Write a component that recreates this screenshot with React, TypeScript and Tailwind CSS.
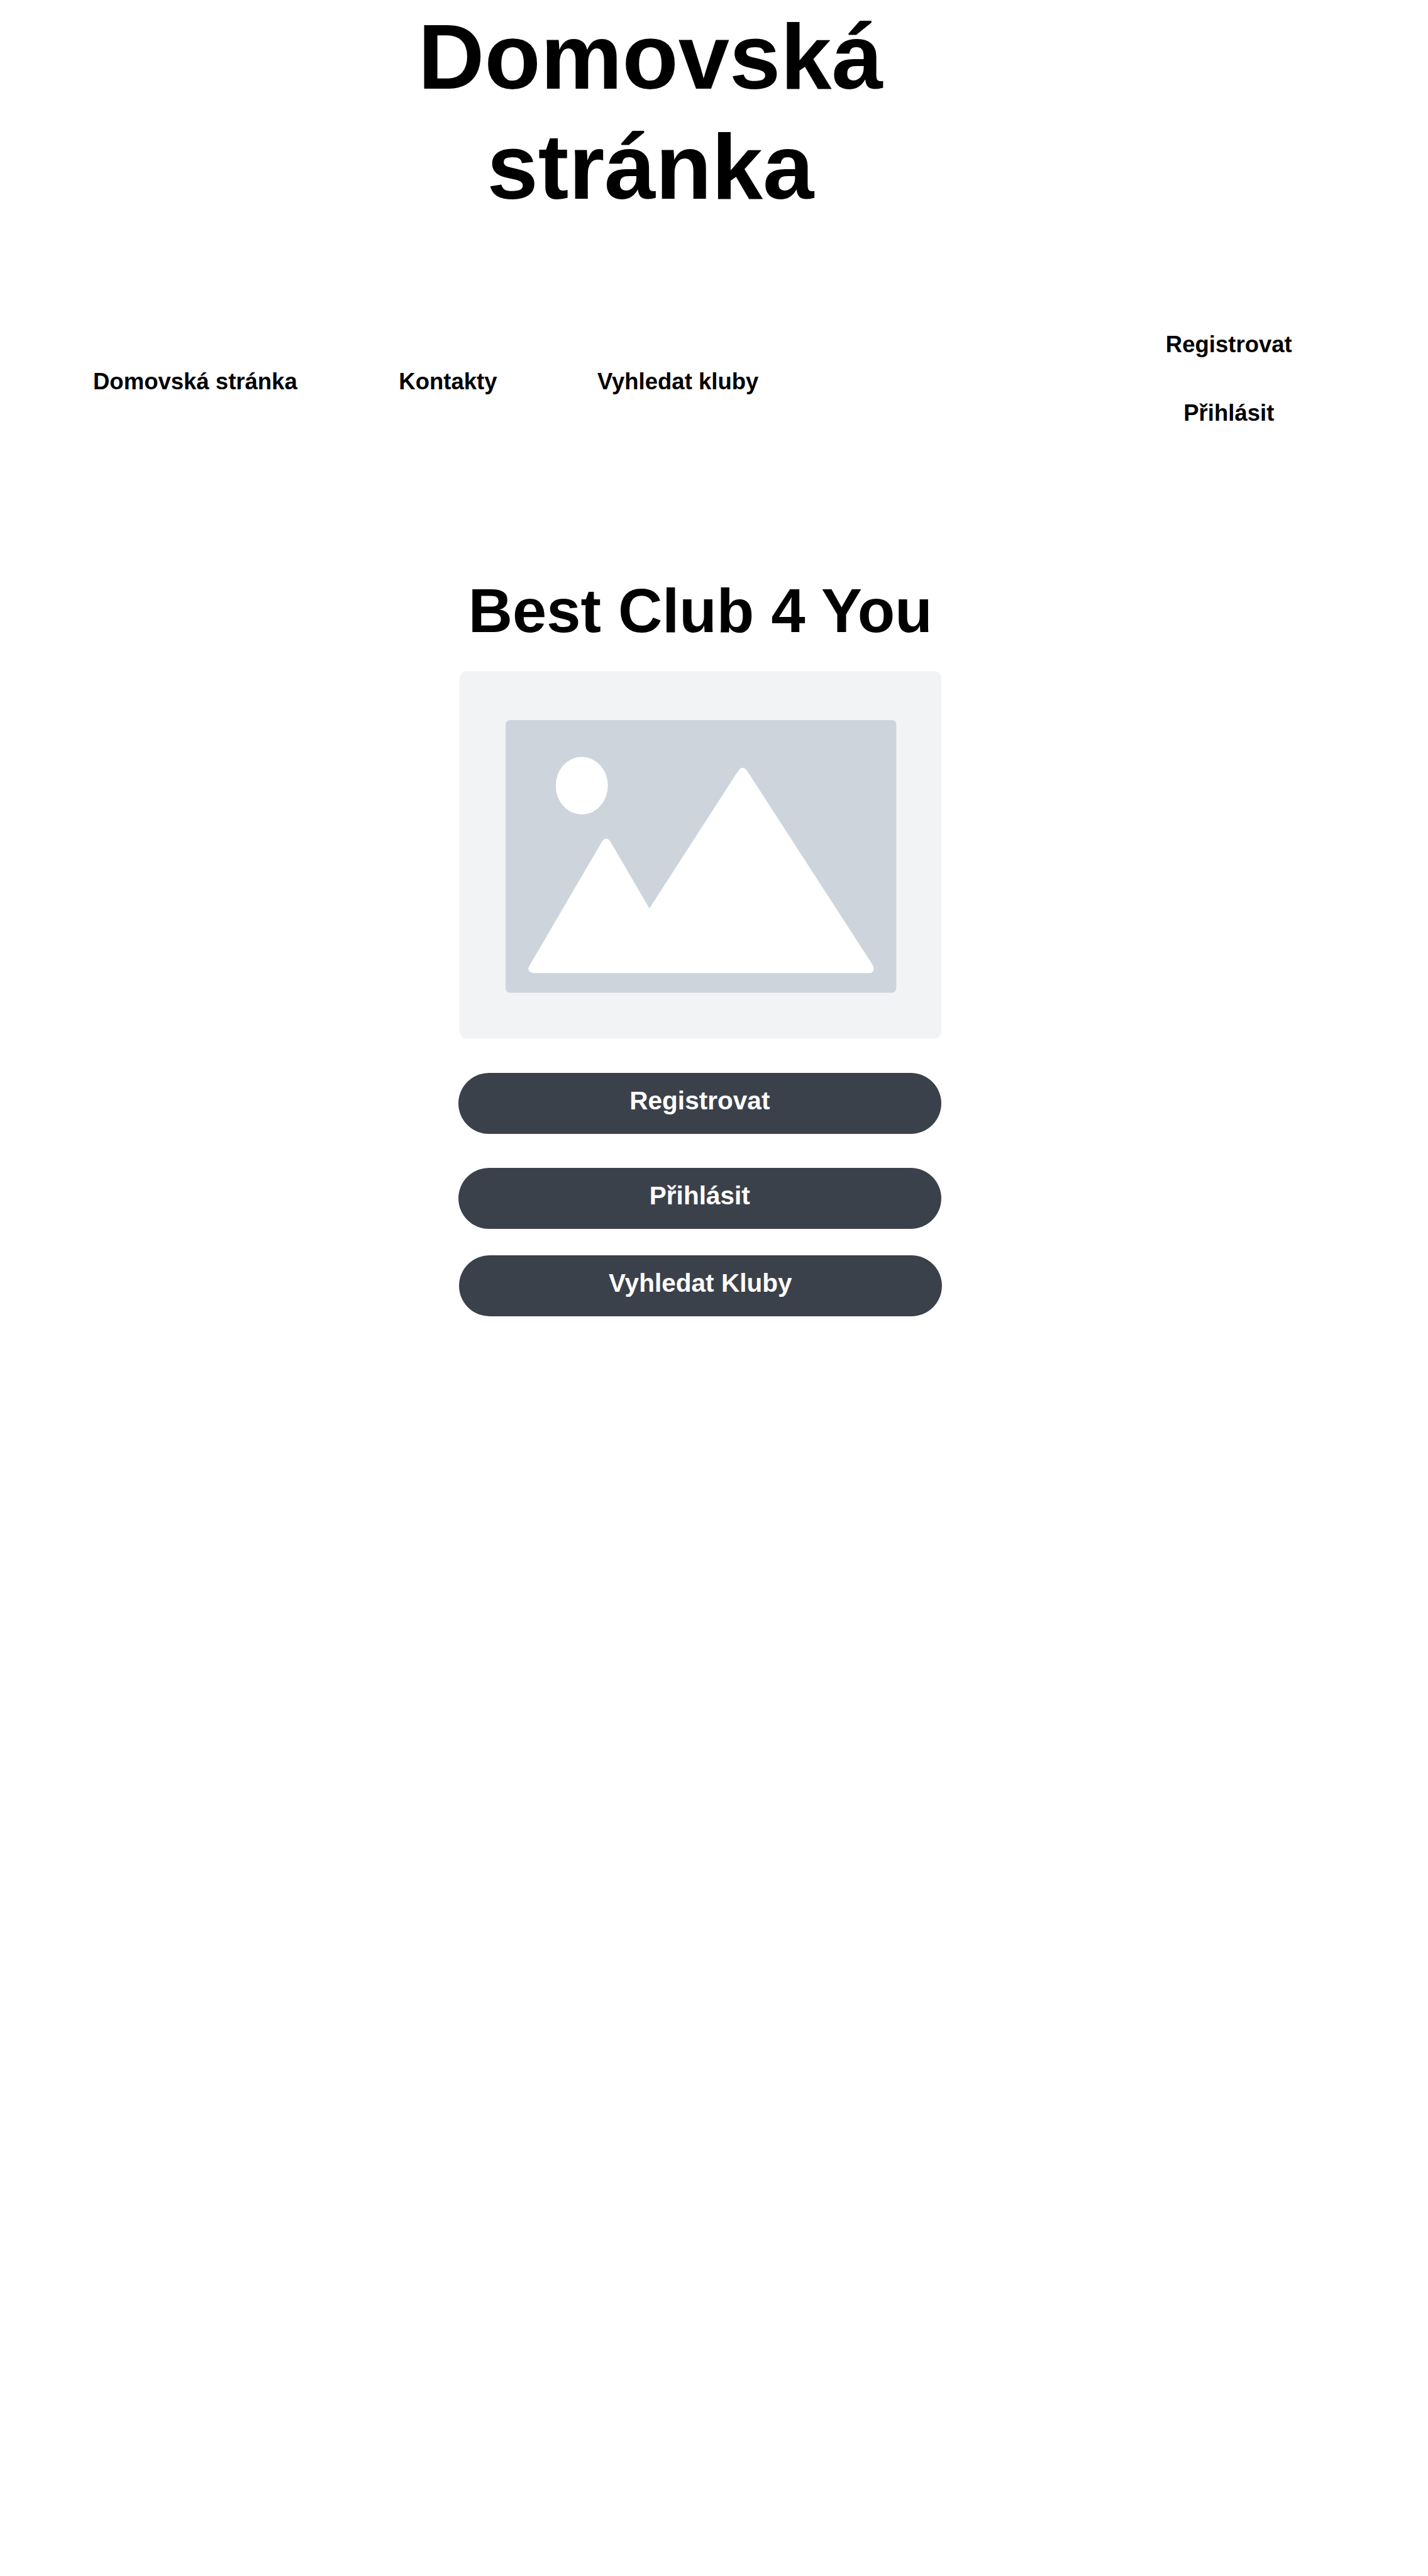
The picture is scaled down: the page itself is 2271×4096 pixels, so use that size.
const placeholder = (
  <svg viewBox="750 1095 787 600" className="block h-[584.6px] w-[766.7px]" aria-hidden="true">
    <rect x="750" y="1095" width="786.6" height="600" rx="12" fill="#f1f3f5" />
    <rect x="825.1" y="1175" width="637.6" height="445" rx="7" fill="#cdd4dc" />
    <ellipse cx="949.4" cy="1282" rx="42.6" ry="47" fill="#fff" />
    <path
      fill="#fff"
      d="M982 1374Q989.2 1363 996.5 1374L1059.7 1482.5L1204 1259Q1212 1246.5 1220 1259L1423.5 1573.5C1428 1581 1426 1588 1418.5 1588H872C865 1588 860 1584 863.6 1576.5Z"
    />
  </svg>
);

const navLink = "text-[36.53px] leading-[44px] whitespace-nowrap";
const button =
  "flex h-[96.8px] w-[768.3px] items-start justify-center rounded-full bg-[#3b414b] pt-[20px] text-[40.6px] leading-[48px] text-white";

export default function App() {
  return (
    <div className="h-[4096px] w-[2271px] overflow-hidden bg-white font-['Liberation_Sans',Arial,sans-serif] font-bold text-black">
      <header className="pt-[3px]">
        <h1 className="ml-[644.4px] w-[780px] text-center text-[146.14px] leading-[175.37px]">
          Domovská stránka
        </h1>
        <nav className="mt-[171px] flex h-[155.4px] items-start">
          <a className={`${navLink} mt-[60px] ml-[148px] w-[486.3px]`}>Domovská stránka</a>
          <a className={`${navLink} mt-[60px] w-[315.7px]`}>Kontakty</a>
          <a className={`${navLink} mt-[60px] w-[804.3px]`}>Vyhledat kluby</a>
          <div className="mt-px flex w-[400px] flex-col items-center gap-[65px]">
            <a className={navLink}>Registrovat</a>
            <a className={navLink}>Přihlásit</a>
          </div>
        </nav>
      </header>
      <main className="ml-[728.7px] w-[770px]">
        <h2 className="mt-[232.4px] text-center text-[97.43px] leading-[117px]">Best Club 4 You</h2>
        <div className="mt-[37.3px] ml-[2px]">{placeholder}</div>
        <button className={`${button} mt-[54.8px]`}>Registrovat</button>
        <button className={`${button} mt-[54.4px]`}>Přihlásit</button>
        <button className={`${button} mt-[42.1px] ml-px`}>Vyhledat Kluby</button>
      </main>
    </div>
  );
}
